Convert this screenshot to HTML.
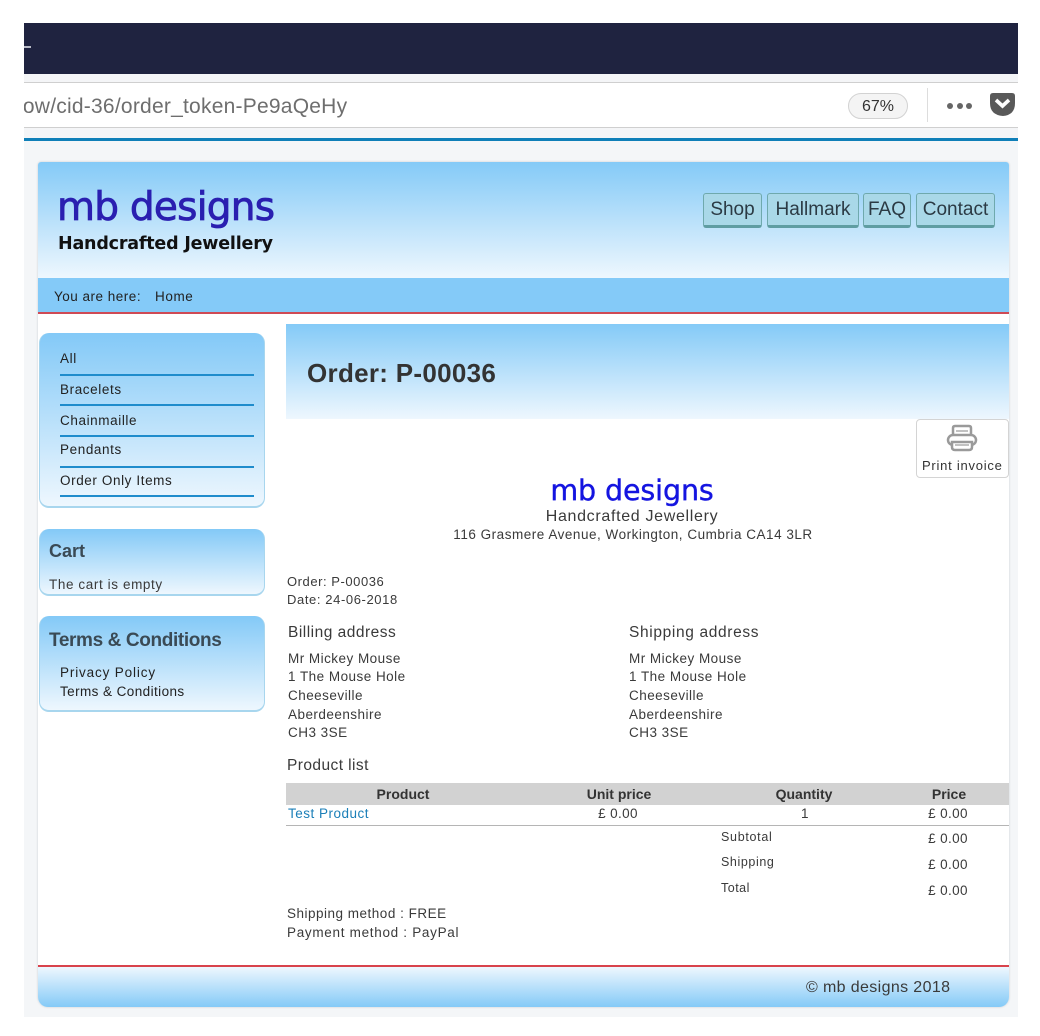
<!DOCTYPE html>
<html><head><meta charset="utf-8"><title>Order P-00036</title>
<style>
html,body{margin:0;padding:0;background:#fff}
body{width:1040px;height:1036px;position:relative;overflow:hidden;font-family:"Liberation Sans",sans-serif;color:#333}
.a{position:absolute}
.t{position:absolute;white-space:nowrap;font-size:13.5px;line-height:16px;color:#3a3a3a;letter-spacing:.47px}
.c{transform:translateX(-50%)}
.nav{position:absolute;top:193px;height:35px;box-sizing:border-box;background:#a9d8e8;border:1px solid #6fa9ad;border-bottom:3px solid #5f9da2;border-radius:3px;font-size:19px;line-height:31px;text-align:center;color:#2b3a44}
.panel{position:absolute;left:39px;width:226px;box-sizing:border-box;background:linear-gradient(#83c9f7,#eef7fe);border:1px solid #a8d6ee;border-top:0;border-bottom-width:2px;border-radius:10px}
.rule{position:absolute;left:60px;width:194px;height:2px;background:#1f8ccc}
.h{position:absolute;white-space:nowrap;font-weight:bold;color:#333}
.ser{font-family:"DejaVu Sans",sans-serif}
</style></head><body>
<div class="a" style="left:24px;top:23px;width:994px;height:51px;background:#1f2340"></div>
<div class="a" style="left:24px;top:46px;width:7px;height:2px;background:#b9bcc8"></div>
<div class="a" style="left:24px;top:74px;width:994px;height:67px;background:#f4f5f7"></div>
<div class="a" style="left:24px;top:82px;width:994px;height:46px;background:#fff;border-top:1px solid #cfcfcf;border-bottom:1px solid #cfcfcf;box-sizing:border-box"></div>
<div class="a" style="left:24px;top:138px;width:994px;height:3px;background:#0f7fb8"></div>
<div class="a" style="left:24px;top:141px;width:994px;height:876px;background:#f4f6f8"></div>
<div class="a" style="left:24px;top:93px;width:340px;height:28px;overflow:hidden"><div class="t" style="left:-6px;top:0;font-size:21px;line-height:28px;color:#6e6e6e;letter-spacing:.23px">low/cid-36/order_token-Pe9aQeHy</div></div>
<div class="a" style="left:848px;top:93px;width:60px;height:26px;box-sizing:border-box;background:#f4f4f4;border:1px solid #d2d2d2;border-radius:13px;font-size:16px;line-height:25px;text-align:center;color:#333">67%</div>
<div class="a" style="left:927px;top:88px;width:1px;height:34px;background:#ddd"></div>
<div class="a" style="left:947px;top:103px;width:6px;height:6px;border-radius:3px;background:#666"></div>
<div class="a" style="left:957px;top:103px;width:6px;height:6px;border-radius:3px;background:#666"></div>
<div class="a" style="left:966px;top:103px;width:6px;height:6px;border-radius:3px;background:#666"></div>
<svg class="a" style="left:990px;top:93px" width="26" height="24" viewBox="0 0 26 24"><path d="M3 0H22Q25 0 25 3V10Q25 22 13 23Q0 22 0 10V3Q0 0 3 0Z" fill="#595959"/><path d="M6 7L12.500 13L19 7" fill="none" stroke="#fff" stroke-width="3.600"/></svg>

<div class="a" style="left:38px;top:162px;width:971px;height:845px;background:#fff;box-shadow:0 0 2px #c8ccd0;border-radius:3px 3px 10px 10px"></div>
<div class="a" style="left:38px;top:162px;width:971px;height:116px;background:linear-gradient(#84caf7,#eef7fe);border-radius:3px 3px 0 0"></div>
<div class="h ser" style="left:57px;top:184px;font-size:39px;line-height:48px;color:#2a1fb0;letter-spacing:-.75px;font-weight:normal;-webkit-text-stroke:.8px #2a1fb0">mb designs</div>
<div class="h ser" style="left:58px;top:233px;font-size:17.5px;line-height:22px;color:#111;letter-spacing:-.2px">Handcrafted Jewellery</div>

<div class="nav" style="left:703px;width:59px">Shop</div>
<div class="nav" style="left:767px;width:92px">Hallmark</div>
<div class="nav" style="left:863px;width:48px">FAQ</div>
<div class="nav" style="left:916px;width:79px">Contact</div>

<div class="a" style="left:38px;top:278px;width:971px;height:34px;background:#84caf8"></div>
<div class="a" style="left:38px;top:312px;width:971px;height:2px;background:#cf4a55"></div>
<div class="t" style="left:54px;top:289px;color:#222;font-size:13.5px;letter-spacing:.5px">You are here:</div>
<div class="t" style="left:155px;top:289px;color:#222;font-size:13.500px;letter-spacing:.6px">Home</div>

<div class="panel" style="top:333px;height:175px"></div>
<div class="t" style="left:60px;top:351px;color:#222;letter-spacing:.6px">All</div>
<div class="rule" style="top:374px"></div>
<div class="t" style="left:60px;top:382px;color:#222;letter-spacing:.6px">Bracelets</div>
<div class="rule" style="top:404px"></div>
<div class="t" style="left:60px;top:413px;color:#222;letter-spacing:.6px">Chainmaille</div>
<div class="rule" style="top:435px"></div>
<div class="t" style="left:60px;top:442px;color:#222;letter-spacing:.6px">Pendants</div>
<div class="rule" style="top:466px"></div>
<div class="t" style="left:60px;top:473px;color:#222;letter-spacing:.6px">Order Only Items</div>
<div class="rule" style="top:495px"></div>

<div class="panel" style="top:529px;height:67px"></div>
<div class="h" style="left:49px;top:539px;font-size:18px;line-height:24px;font-weight:bold;color:#3a4a55">Cart</div>
<div class="t" style="left:49px;top:577px;letter-spacing:.6px">The cart is empty</div>

<div class="panel" style="top:616px;height:96px"></div>
<div class="h" style="left:49px;top:629px;font-size:19px;line-height:24px;color:#3a4a55;letter-spacing:-.37px">Terms &amp; Conditions</div>
<div class="t" style="left:60px;top:665px;font-size:13.5px;letter-spacing:.85px;color:#222">Privacy Policy</div>
<div class="t" style="left:60px;top:684px;font-size:13.5px;letter-spacing:.42px;color:#222">Terms &amp; Conditions</div>

<div class="a" style="left:286px;top:324px;width:723px;height:95px;background:linear-gradient(#84caf7,#eef7fe)"></div>
<div class="h" style="left:307px;top:356px;font-size:26px;line-height:34px;letter-spacing:.3px">Order: P-00036</div>

<div class="a" style="left:916px;top:419px;width:93px;height:59px;box-sizing:border-box;background:#fff;border:1px solid #d4d4d4;border-radius:4px"></div>
<svg class="a" style="left:946px;top:424px" width="32" height="28" viewBox="0 0 32 28" fill="none" stroke="#9a9a9a" stroke-width="2.500"><path d="M7 11V4Q7 2 9 2H23Q25 2 25 4V11"/><path d="M10 7H22" stroke-width="1.200"/><rect x="2" y="11" width="28" height="10" rx="5"/><path d="M6 18V23Q6 26 9 26H23Q26 26 26 23V18Z" fill="#fff"/><path d="M9 21H23" stroke-width="1.200"/></svg>
<div class="t" style="left:922px;top:458px;color:#333;font-size:13px;letter-spacing:.75px">Print invoice</div>

<div class="t ser c" style="left:632px;top:472px;font-size:28.5px;line-height:38px;color:#1414e0;letter-spacing:-.1px;-webkit-text-stroke:.4px #1414e0">mb designs</div>
<div class="t c" style="left:632px;top:507px;font-size:16px;line-height:20px;letter-spacing:.68px">Handcrafted Jewellery</div>
<div class="t c" style="left:633px;top:527px;font-size:13.5px;letter-spacing:.52px">116 Grasmere Avenue, Workington, Cumbria CA14 3LR</div>

<div class="t" style="left:287px;top:574px;font-size:13px;letter-spacing:.55px">Order: P-00036</div>
<div class="t" style="left:287px;top:592px;font-size:13px;letter-spacing:.6px">Date: 24-06-2018</div>

<div class="t" style="left:288px;top:624px;font-size:15.5px;line-height:18px;letter-spacing:.5px">Billing address</div>
<div class="t" style="left:288px;top:651px">Mr Mickey Mouse</div>
<div class="t" style="left:288px;top:669px">1 The Mouse Hole</div>
<div class="t" style="left:288px;top:688px">Cheeseville</div>
<div class="t" style="left:288px;top:707px">Aberdeenshire</div>
<div class="t" style="left:288px;top:725px">CH3 3SE</div>

<div class="t" style="left:629px;top:624px;font-size:15.5px;line-height:18px;letter-spacing:.65px">Shipping address</div>
<div class="t" style="left:629px;top:651px">Mr Mickey Mouse</div>
<div class="t" style="left:629px;top:669px">1 The Mouse Hole</div>
<div class="t" style="left:629px;top:688px">Cheeseville</div>
<div class="t" style="left:629px;top:707px">Aberdeenshire</div>
<div class="t" style="left:629px;top:725px">CH3 3SE</div>

<div class="t" style="left:287px;top:757px;font-size:15.5px;line-height:18px;letter-spacing:.43px">Product list</div>
<div class="a" style="left:286px;top:783px;width:723px;height:22px;background:#d2d2d2"></div>
<div class="h c" style="left:403px;top:785px;font-size:14px;line-height:18px">Product</div>
<div class="h c" style="left:619px;top:785px;font-size:14px;line-height:18px">Unit price</div>
<div class="h c" style="left:804px;top:785px;font-size:14px;line-height:18px">Quantity</div>
<div class="h c" style="left:949px;top:785px;font-size:14px;line-height:18px">Price</div>

<div class="t" style="left:288px;top:806px;font-size:13.5px;letter-spacing:.5px;color:#1b7fb8">Test Product</div>
<div class="t c" style="left:618px;top:806px;font-size:13.5px;letter-spacing:.35px">£ 0.00</div>
<div class="t c" style="left:805px;top:806px;font-size:13.5px">1</div>
<div class="t c" style="left:948px;top:806px;font-size:13.5px;letter-spacing:.35px">£ 0.00</div>
<div class="a" style="left:286px;top:825px;width:723px;height:1px;background:#b5b5b5"></div>

<div class="t" style="left:721px;top:829px;font-size:12.5px;letter-spacing:.7px">Subtotal</div>
<div class="t" style="left:721px;top:854px;font-size:12.5px;letter-spacing:.6px">Shipping</div>
<div class="t" style="left:721px;top:880px;font-size:12.5px;letter-spacing:.5px">Total</div>
<div class="t c" style="left:948px;top:831px;font-size:13.5px;letter-spacing:.35px">£ 0.00</div>
<div class="t c" style="left:948px;top:857px;font-size:13.5px;letter-spacing:.35px">£ 0.00</div>
<div class="t c" style="left:948px;top:883px;font-size:13.5px;letter-spacing:.35px">£ 0.00</div>

<div class="t" style="left:287px;top:906px;font-size:13.5px;letter-spacing:.5px">Shipping method : FREE</div>
<div class="t" style="left:287px;top:925px;font-size:13.5px;letter-spacing:.7px">Payment method : PayPal</div>

<div class="a" style="left:38px;top:965px;width:971px;height:2px;background:#d8434c"></div>
<div class="a" style="left:38px;top:967px;width:971px;height:40px;background:linear-gradient(#eef7fe,#84caf7);border-radius:0 0 10px 10px"></div>
<div class="t" style="left:806px;top:979px;font-size:16px;line-height:18px;letter-spacing:.37px">© mb designs 2018</div>
</body></html>
